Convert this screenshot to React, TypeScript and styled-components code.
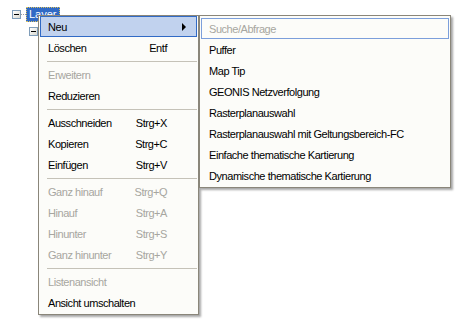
import React from "react";
import styled, { createGlobalStyle } from "styled-components";

const Global = createGlobalStyle`
  html, body { margin: 0; padding: 0; background: #ffffff; }
  body { font-family: "Liberation Sans", Arial, sans-serif; font-size: 11px; }
`;

const Screen = styled.div`
  position: relative;
  width: 460px;
  height: 320px;
  overflow: hidden;
  background: #ffffff;
`;

const Tree = styled.div`
  display: flex;
  flex-direction: column;
  padding: 7px 0 0 12px;
`;

const TreeRow = styled.div<{ $indent: number }>`
  display: flex;
  align-items: center;
  height: 14px;
  margin-left: ${(p) => p.$indent}px;
  margin-bottom: 3px;
`;

const Expander = styled.div`
  position: relative;
  width: 7px;
  height: 7px;
  border: 1px solid #7f9db9;
  background: linear-gradient(135deg, #ffffff, #d8d8d0);
  &::after {
    content: "";
    position: absolute;
    left: 1px;
    top: 3px;
    width: 5px;
    height: 1px;
    background: #000;
  }
`;

const Connector = styled.div`
  width: 5px;
  border-top: 1px dotted #a0a0a0;
`;

const NodeLabel = styled.div`
  height: 13px;
  line-height: 13px;
  padding: 0 2px;
  background: #316ac5;
  color: #ffffff;
  border: 1px dotted #d8c060;
  font-size: 11px;
`;

const Menu = styled.div<{ $left: number; $top: number; $width: number; $padTop: number }>`
  position: absolute;
  left: ${(p) => p.$left}px;
  top: ${(p) => p.$top}px;
  width: ${(p) => p.$width}px;
  box-sizing: border-box;
  display: flex;
  flex-direction: column;
  padding: ${(p) => p.$padTop}px 1px 1px 1px;
  background: #fcfcf9;
  border: 1px solid #8a867a;
  box-shadow: 2px 2px 2px rgba(0, 0, 0, 0.35);
`;

const Item = styled.div<{ $disabled?: boolean; $hot?: "on" | "box" }>`
  display: flex;
  align-items: center;
  box-sizing: border-box;
  height: 21px;
  padding: 0 29px 0 7px;
  border: 1px solid
    ${(p) => (p.$hot === "on" ? "#316ac5" : p.$hot === "box" ? "#7c9fdb" : "transparent")};
  background: ${(p) => (p.$hot === "on" ? "#c1d2ee" : "transparent")};
  color: ${(p) => (p.$disabled ? "#a7a6a0" : "#000000")};
  white-space: nowrap;
  font-size: 11px;
  letter-spacing: -0.45px;
`;

const Label = styled.span`
  flex: 1;
`;

const Shortcut = styled.span`
  text-align: right;
`;

const Arrow = styled.span`
  position: absolute;
  right: 10px;
  width: 0;
  height: 0;
  border-top: 4px solid transparent;
  border-bottom: 4px solid transparent;
  border-left: 4px solid #000;
`;

const HotItem = styled(Item)`
  position: relative;
`;

const Separator = styled.div`
  height: 6px;
  display: flex;
  align-items: center;
  padding-left: 7px;
  &::after {
    content: "";
    flex: 1;
    height: 1px;
    background: #c5c2b8;
  }
`;

type Entry = { label: string; shortcut?: string; disabled?: boolean } | "sep";

const mainItems: Entry[] = [
  { label: "Löschen", shortcut: "Entf" },
  "sep",
  { label: "Erweitern", disabled: true },
  { label: "Reduzieren" },
  "sep",
  { label: "Ausschneiden", shortcut: "Strg+X" },
  { label: "Kopieren", shortcut: "Strg+C" },
  { label: "Einfügen", shortcut: "Strg+V" },
  "sep",
  { label: "Ganz hinauf", shortcut: "Strg+Q", disabled: true },
  { label: "Hinauf", shortcut: "Strg+A", disabled: true },
  { label: "Hinunter", shortcut: "Strg+S", disabled: true },
  { label: "Ganz hinunter", shortcut: "Strg+Y", disabled: true },
  "sep",
  { label: "Listenansicht", disabled: true },
  { label: "Ansicht umschalten" },
];

const subItems = [
  "Puffer",
  "Map Tip",
  "GEONIS Netzverfolgung",
  "Rasterplanauswahl",
  "Rasterplanauswahl mit Geltungsbereich-FC",
  "Einfache thematische Kartierung",
  "Dynamische thematische Kartierung",
];

export default function App() {
  return (
    <Screen>
      <Global />
      <Tree>
        <TreeRow $indent={0}>
          <Expander />
          <Connector />
          <NodeLabel>Layer</NodeLabel>
        </TreeRow>
        <TreeRow $indent={17}>
          <Expander />
        </TreeRow>
      </Tree>

      <Menu $left={38} $top={15} $width={161} $padTop={0}>
        <HotItem $hot="on">
          <Label>Neu</Label>
          <Arrow />
        </HotItem>
        {mainItems.map((e, i) =>
          e === "sep" ? (
            <Separator key={i} />
          ) : (
            <Item key={i} $disabled={e.disabled}>
              <Label>{e.label}</Label>
              {e.shortcut && <Shortcut>{e.shortcut}</Shortcut>}
            </Item>
          )
        )}
      </Menu>

      <Menu $left={199} $top={15} $width={252} $padTop={2}>
        <Item $hot="box" $disabled>
          <Label>Suche/Abfrage</Label>
        </Item>
        {subItems.map((s) => (
          <Item key={s}>
            <Label>{s}</Label>
          </Item>
        ))}
      </Menu>
    </Screen>
  );
}
